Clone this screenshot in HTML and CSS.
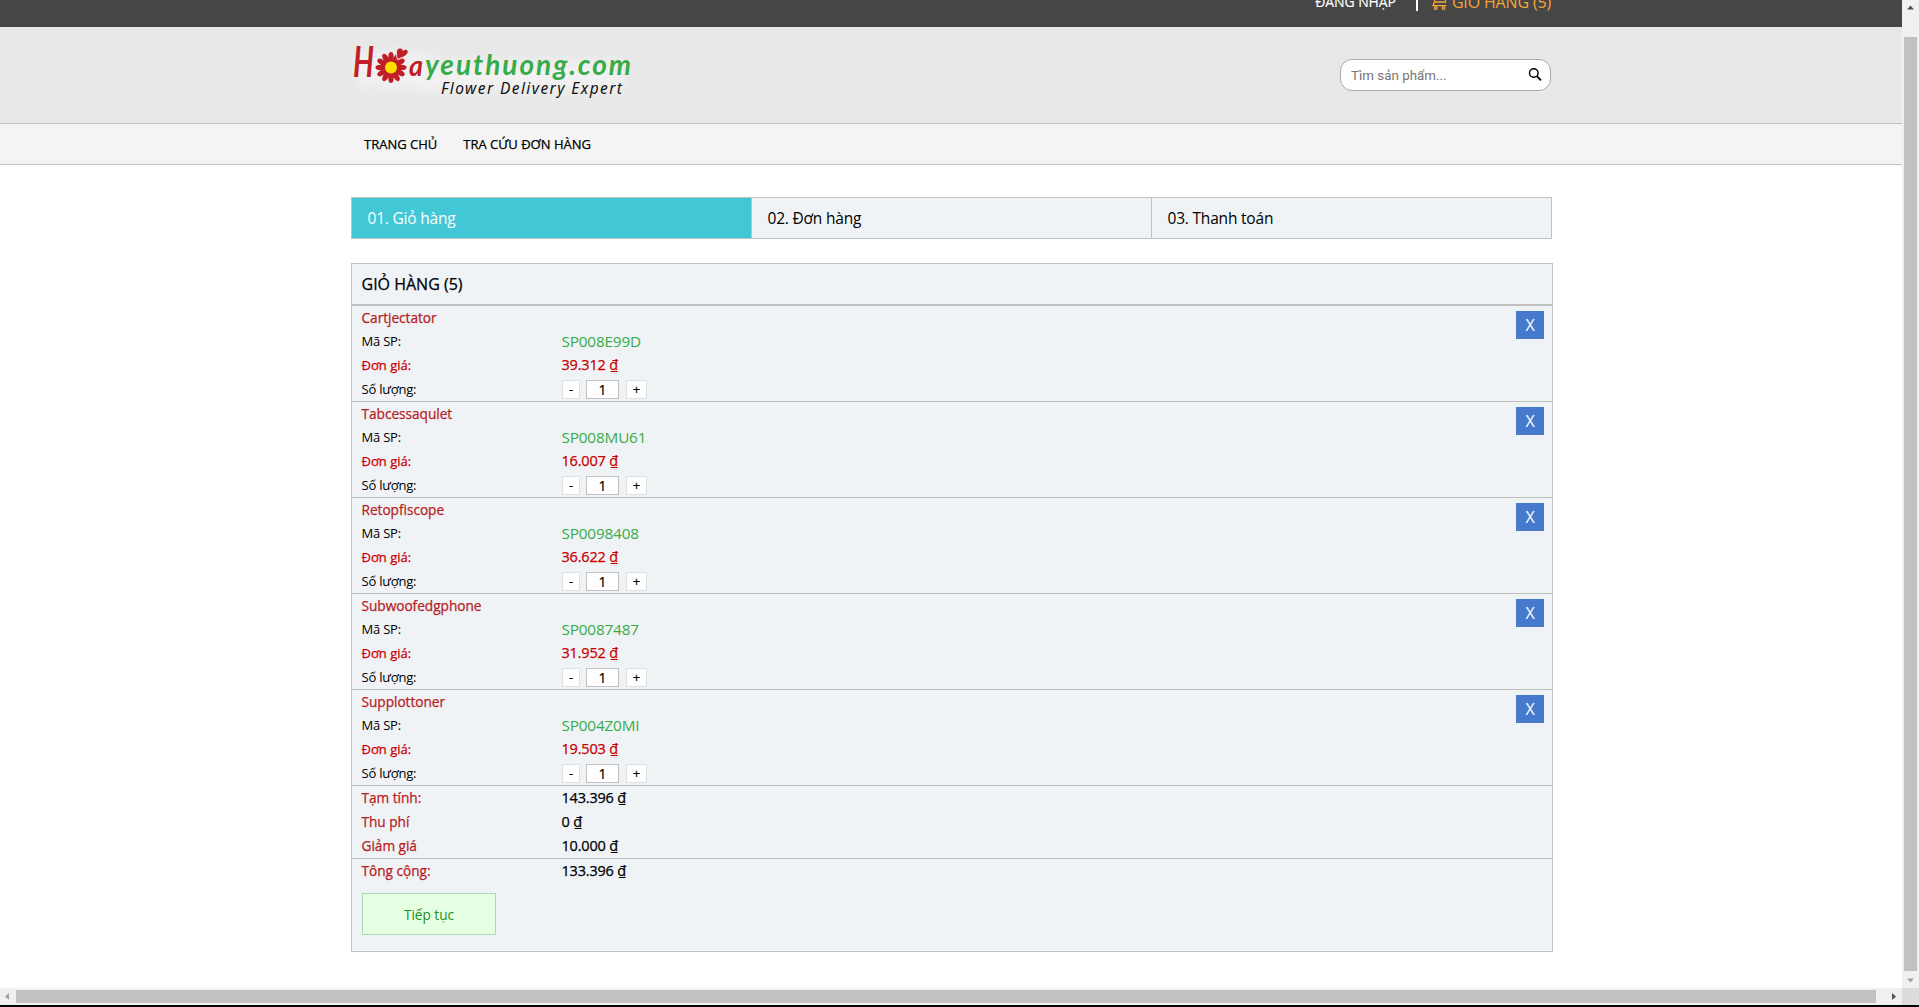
FILE: index.html
```html
<!DOCTYPE html>
<html lang="vi">
<head>
<meta charset="utf-8">
<title>Giỏ hàng</title>
<link rel="stylesheet" href="styles.css">
</head>
<body>
<div class="window">
  <div class="viewport">
    <div class="page">
      <div class="topbar"><div class="container topbar-inner">
        <a class="login">ĐĂNG NHẬP</a>
        <i class="divider"></i>
        <a class="cart-link"><svg class="cart-icon" width="16" height="16" viewBox="0 0 16 16" fill="none" stroke="currentColor" stroke-width="1.3"><path d="M2.500 1V8.500M2.500 8H13.500V1M2.500 8L1 11.700H14.500"/><circle cx="3.800" cy="14" r="1.300"/><circle cx="11.500" cy="14" r="1.300"/></svg><span>GIỎ HÀNG (5)</span></a>
      </div></div>
      <header class="header"><div class="container header-inner">
        <svg class="logo" width="290" height="62" viewBox="0 0 290 62">
          <defs><filter id="glow" x="-10%" y="-30%" width="120%" height="160%"><feGaussianBlur stdDeviation="6"/></filter></defs>
          <path d="M6 10H70L90 18H272V48H80L30 44H6Z" fill="#fff" opacity=".4" filter="url(#glow)"/>
          <g class="logo-name">
            <text class="logo-red" x="2" y="34" font-size="42" textLength="21" lengthAdjust="spacingAndGlyphs">H</text>
            <text class="logo-red" x="58" y="33" font-size="28" textLength="14" lengthAdjust="spacingAndGlyphs">a</text>
            <text class="logo-green" x="74" y="32" font-size="28" textLength="206" lengthAdjust="spacing">yeuthuong.com</text>
          </g>
          <g fill="#c01f28" transform="translate(40 24.500)">
            <g id="petals"><ellipse cx="0" cy="-10.500" rx="2.700" ry="5"/><ellipse cx="0" cy="10.500" rx="2.700" ry="5"/><ellipse cx="10.500" cy="0" rx="5" ry="2.700"/><ellipse cx="-10.500" cy="0" rx="5" ry="2.700"/></g>
            <use href="#petals" transform="rotate(30)"/><use href="#petals" transform="rotate(60)"/>
            <circle r="10"/>
            <path d="M6.500 -8C5 -13 4.500 -18 8 -19.500C10.500 -20 12 -18.500 12 -17C14 -19.500 18 -18 17 -15C15.500 -11 11 -10 6.500 -8Z" stroke="#eee" stroke-width="1"/>
            <circle r="6" fill="#ffde00"/>
          </g>
          <text class="logo-tag" x="90" y="51" textLength="181">Flower Delivery Expert</text>
        </svg>
        <form class="search"><input type="text" placeholder="Tìm sản phẩm..."><svg width="16" height="16" viewBox="0 0 16 16" fill="none" stroke="#000"><circle cx="6.800" cy="6" r="4.300" stroke-width="1.400"/><path d="M9.900 9.200L14 13.300" stroke-width="1.800"/></svg></form>
      </div></header>
      <nav class="nav"><div class="container nav-inner"><a>TRANG CHỦ</a><a>TRA CỨU ĐƠN HÀNG</a></div></nav>
      <main class="container main">
        <ol class="steps"><li class="active">01. Giỏ hàng</li><li>02. Đơn hàng</li><li>03. Thanh toán</li></ol>
        <section class="cart">
          <h1>GIỎ HÀNG (5)</h1>
          <article class="item"><h2>Cartjectator</h2><div class="row"><span class="label">Mã SP:</span><span class="code">SP008E99D</span></div><div class="row price"><span class="label">Đơn giá:</span><b>39.312 ₫</b></div><div class="row"><span class="label">Số lượng:</span><button class="minus">-</button><input class="qty" value="1"><button class="plus">+</button></div><button class="remove">X</button></article>
          <article class="item"><h2>Tabcessaqulet</h2><div class="row"><span class="label">Mã SP:</span><span class="code">SP008MU61</span></div><div class="row price"><span class="label">Đơn giá:</span><b>16.007 ₫</b></div><div class="row"><span class="label">Số lượng:</span><button class="minus">-</button><input class="qty" value="1"><button class="plus">+</button></div><button class="remove">X</button></article>
          <article class="item"><h2>Retopfiscope</h2><div class="row"><span class="label">Mã SP:</span><span class="code">SP0098408</span></div><div class="row price"><span class="label">Đơn giá:</span><b>36.622 ₫</b></div><div class="row"><span class="label">Số lượng:</span><button class="minus">-</button><input class="qty" value="1"><button class="plus">+</button></div><button class="remove">X</button></article>
          <article class="item"><h2>Subwoofedgphone</h2><div class="row"><span class="label">Mã SP:</span><span class="code">SP0087487</span></div><div class="row price"><span class="label">Đơn giá:</span><b>31.952 ₫</b></div><div class="row"><span class="label">Số lượng:</span><button class="minus">-</button><input class="qty" value="1"><button class="plus">+</button></div><button class="remove">X</button></article>
          <article class="item"><h2>Supplottoner</h2><div class="row"><span class="label">Mã SP:</span><span class="code">SP004Z0MI</span></div><div class="row price"><span class="label">Đơn giá:</span><b>19.503 ₫</b></div><div class="row"><span class="label">Số lượng:</span><button class="minus">-</button><input class="qty" value="1"><button class="plus">+</button></div><button class="remove">X</button></article>
          <div class="totals"><div class="row"><span class="label">Tạm tính:</span><b>143.396 ₫</b></div><div class="row"><span class="label">Thu phí</span><b>0 ₫</b></div><div class="row"><span class="label">Giảm giá</span><b>10.000 ₫</b></div></div>
          <div class="totals grand"><div class="row"><span class="label">Tông cộng:</span><b>133.396 ₫</b></div></div>
          <button class="continue">Tiếp tục</button>
        </section>
      </main>
    </div>
    <div class="scroll-y"><svg width="17" height="17"><path d="M5 9.500H12L8.500 5.500Z" fill="#505050"/></svg><i></i><svg width="17" height="17"><path d="M5 7.500H12L8.500 11.500Z" fill="#a3a3a3"/></svg></div>
  </div>
  <div class="scroll-x"><svg width="16" height="17"><path d="M9 5V12L5 8.500Z" fill="#a3a3a3"/></svg><i></i><svg width="26" height="17"><path d="M16 5V12L20 8.500Z" fill="#505050"/></svg><span class="corner"></span></div>
</div>
</body>
</html>
```
FILE: styles.css
```css
* { box-sizing: border-box; }
body { margin: 0; overflow: hidden; background: #000; color: #000; font-family: "Open Sans", "Noto Sans", sans-serif; font-size: 13px; }
.window { height: 1007px; border-bottom: 2px solid #000; display: flex; flex-direction: column; }
.viewport { flex: 1; display: flex; min-height: 0; }
.page { flex: 1; background: #fff; }
.container { width: 1202px; margin-left: 351px; }
.topbar { height: 27px; background: #464646; overflow: hidden; }
.topbar-inner { display: flex; justify-content: flex-end; align-items: flex-start; padding-right: 2px; line-height: 22px; }
.login { margin-top: -9px; color: #fff; font-size: 14px; letter-spacing: -.1px; -webkit-text-stroke: .15px; }
.divider { width: 2px; height: 11px; margin: 0 14px 0 20px; background: #fff; }
.cart-link { display: flex; gap: 4px; margin-top: -9px; color: #f5a536; font-size: 16px; letter-spacing: -.16px; }
.cart-icon { margin-top: 3px; }
.header { height: 97px; background: #e8e8e8; border-bottom: 1px solid #c0c0c0; }
.header-inner { display: flex; justify-content: space-between; align-items: flex-start; padding-right: 2px; }
.logo { margin-top: 16px; }
.logo-name { font-family: "Lato", sans-serif; font-weight: 700; font-style: italic; }
.logo-red { fill: #c01f28; }
.logo-green { fill: #38ab49; }
.logo-tag { font-family: "Noto Sans", sans-serif; font-style: italic; font-size: 15.5px; fill: #111; }
.search { display: flex; align-items: center; width: 211px; height: 32px; margin: 32px 0 0; padding: 0 7px 0 10px; border: 1px solid #aaa; border-radius: 12px; background: #fff; }
.search input { flex: 1; min-width: 0; padding: 0; border: 0; outline: 0; background: none; font: 13.33px Roboto, sans-serif; letter-spacing: .02px; }
.search input::placeholder { color: #757575; }
.nav { height: 41px; background: #f4f4f4; border-bottom: 1px solid #c0c0c0; }
.nav-inner { display: flex; gap: 26px; padding-left: 13px; line-height: 40px; }
.nav, h1, h2, .row b, .price .label, .totals .label { -webkit-text-stroke: .25px; }
.main { padding-top: 32px; }
.steps { display: grid; grid-template-columns: 400px 400px 400px; width: 1201px; height: 42px; margin: 0 0 24px; padding: 0; list-style: none; border: 1px solid #c0c0c0; border-left: 0; background: #eff3f6; font-size: 15.5px; line-height: 41px; letter-spacing: -.2px; }
.steps li { height: 40px; border-left: 1px solid #c0c0c0; padding-left: 15.5px; }
.steps .active { background: #42c7d7; color: #fff; }
.cart { height: 689px; border: 1px solid #c0c0c0; background: #eff3f6; }
h1 { height: 42px; margin: 0; padding-left: 9.5px; border-bottom: 2px solid #c0c0c0; font-size: 16px; font-weight: 400; line-height: 41px; }
.item { position: relative; height: 96px; overflow: hidden; border-bottom: 1px solid #c0c0c0; }
h2 { height: 24px; margin: 0; padding-left: 9.5px; color: #b81c24; font-size: 13.7px; font-weight: 400; line-height: 23px; letter-spacing: -.04px; }
.row { display: flex; height: 24px; padding-left: 10px; line-height: 24px; }
.item .row { line-height: 22px; }
.label { width: 200px; margin-left: -.5px; margin-right: .5px; letter-spacing: -.2px; }
.row b { margin-left: -.5px; font-size: 14.5px; font-weight: 400; letter-spacing: -.2px; }
.code { margin-left: -.5px; color: #38ab49; font-size: 15.3px; letter-spacing: -.16px; line-height: 23px; }
.price { color: #cc0000; }
.price .label { letter-spacing: 0; }
.row button, .qty { height: 19px; margin-top: 2px; padding: 0; border: 1px solid #e0e0e0; background: #fff; font: 13px/17px "Open Sans", sans-serif; text-align: center; -webkit-text-stroke: .2px; }
.minus { width: 18px; }
.row .qty { width: 33px; margin: 2px 7px 0 6px; border-color: #c0c0c0; font-size: 14px; }
.plus { width: 21px; }
.remove { position: absolute; top: 5px; right: 8px; width: 28px; height: 28px; padding: 0; border: 0; background: #467acc; color: #fff; font: 16px "Open Sans", sans-serif; }
.totals { height: 73px; border-bottom: 1px solid #c0c0c0; }
.totals .label { color: #b81c24; font-size: 13.7px; letter-spacing: -.04px; }
.grand { height: 34px; border: 0; }
.continue { width: 134px; height: 42px; margin-left: 10px; padding: 0; border: 1px solid #aad8aa; background: #e5ffe3; color: #1f8f1f; font: 13.6px "Open Sans", sans-serif; }
.scroll-y { width: 17px; background: #f0f0f0; display: flex; flex-direction: column; }
.scroll-y i { flex: 1; margin: 20px 2px 0; background: #c1c1c1; }
.scroll-x { height: 17px; background: #f0f0f0; display: flex; }
.scroll-x i { flex: 1; margin: 2px 0; background: #c1c1c1; }
.corner { width: 17px; background: #dcdcdc; }
```
